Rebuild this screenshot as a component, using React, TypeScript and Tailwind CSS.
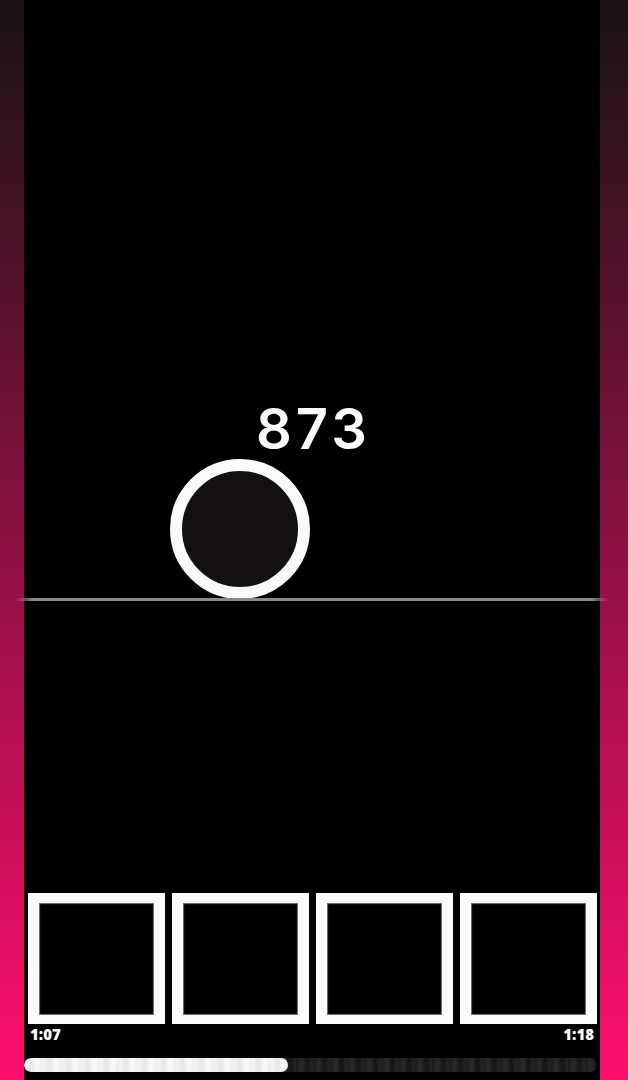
const thumbs = [0, 1, 2, 3]

export default function App() {
  return (
    <div className="flex h-[1080px] w-[628px] overflow-hidden bg-[linear-gradient(to_bottom,#181314,#ff0f6e)]">
      <div className="w-[24px] shrink-0" />
      <main className="flex w-[576px] shrink-0 flex-col bg-black">
        {/* stage */}
        <div className="flex h-[599px] flex-col justify-end">
          <div
            className="ml-[232px] text-[56px] leading-none font-semibold tracking-[4px] text-[#fbfbf9]"
            style={{ fontFamily: 'Inter, "Noto Sans", sans-serif' }}
          >
            873
          </div>
          <div className="mt-[2px] ml-[146px] h-[140px] w-[140px] rounded-full border-[12px] border-[#fbfbf9] bg-[#141010]" />
        </div>

        {/* ground line */}
        <div className="-mt-[1px] -mx-[10px] h-[3px] bg-[linear-gradient(to_right,transparent,#8a8a8a_3%,#8a8a8a_97%,transparent)]" />

        <div className="flex-1" />

        {/* thumbnails */}
        <div className="flex gap-[7px] pl-[4px]">
          {thumbs.map((i) => (
            <div
              key={i}
              className="h-[131px] w-[137px] border-x-[11px] border-t-[10px] border-b-[9px] border-[#fbfbf9] bg-black shadow-[inset_0_0_1px_1px_#777]"
            />
          ))}
        </div>

        <div
          className="mt-[1px] flex justify-between pr-[6px] pl-[6px] text-[15px] leading-[18px] font-extrabold text-white"
          style={{ fontFamily: '"Open Sans", "Liberation Sans", sans-serif' }}
        >
          <span>1:07</span>
          <span>1:18</span>
        </div>

        {/* progress */}
        <div className="mt-[15px] mr-[3px] mb-[8px] flex h-[14px] overflow-hidden rounded-full bg-[repeating-linear-gradient(to_right,#1c1c1c_0px,#2a2a2a_6px,#141414_11px,#262626_17px)]">
          <div className="h-full w-[264px] rounded-full bg-[repeating-linear-gradient(to_right,#f4f4f4_0px,#e6e6e6_7px,#fafafa_13px,#ececec_19px)]" />
        </div>
      </main>
      <div className="w-[28px] shrink-0" />
    </div>
  )
}
